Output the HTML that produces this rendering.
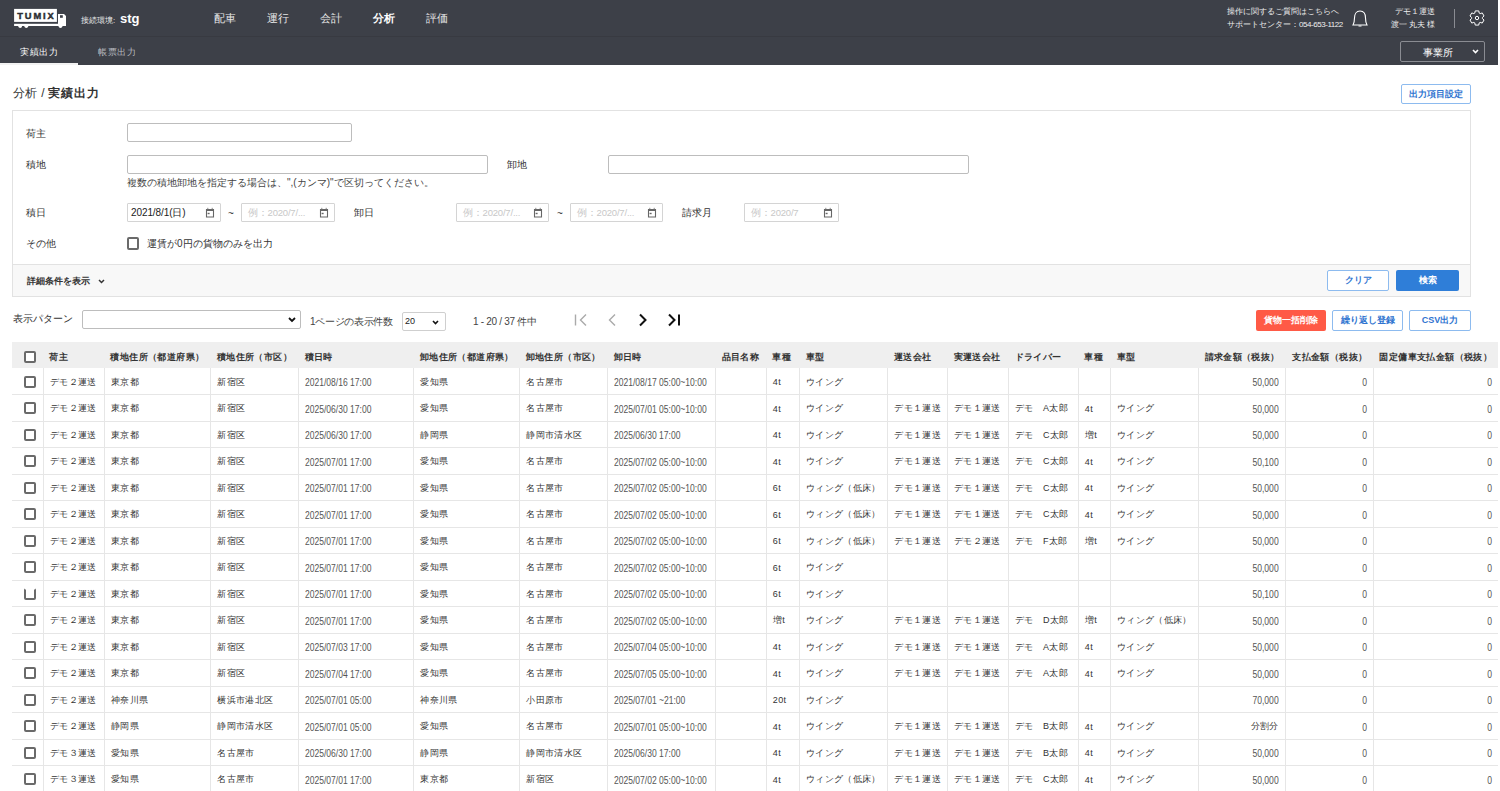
<!DOCTYPE html>
<html lang="ja"><head><meta charset="utf-8">
<style>
*{box-sizing:border-box}
html,body{margin:0;padding:0;background:#fff;width:1500px;height:791px;overflow:hidden}
body{font-family:"Liberation Sans",sans-serif;color:#333;font-size:10px;position:relative}
.abs{position:absolute;white-space:nowrap}
#hdr{position:absolute;left:0;top:0;width:1498px;height:65px;background:#3d4048}
#hdr .sep{position:absolute;left:0;top:36px;width:1498px;height:1px;background:#383a41}
.nav{position:absolute;top:12px;font-size:10.5px;color:#e6e6e6;line-height:13px}
.nav.b{font-weight:bold;color:#fff}
.tab{position:absolute;top:47px;font-size:9px;line-height:11px;letter-spacing:0.7px}
#tabline{position:absolute;left:0;top:63px;width:78px;height:2px;background:#f2f2f2}
.htxt{position:absolute;color:#eee;font-size:8px;line-height:10px;white-space:nowrap}
#office{position:absolute;left:1400px;top:41px;width:85px;height:21px;border:1px solid #8a8c92;border-radius:2px}
.crumb{position:absolute;left:13px;top:86px;font-size:12px;line-height:14px;color:#333}
.btn-o{position:absolute;border:1px solid #8dbbef;border-radius:2px;background:#fff;color:#2f74d0;font-size:9px;text-align:center;font-weight:bold}
#panel{position:absolute;left:12px;top:110px;width:1459px;height:187px;border:1px solid #e2e2e2;background:#fff}
#pfoot{position:absolute;left:0;top:153px;width:1457px;height:32px;background:#f8f8f8;border-top:1px solid #e2e2e2}
.lbl{position:absolute;font-size:10px;line-height:12px;color:#333}
.inp{position:absolute;border:1px solid #bdbdbd;border-radius:2px;background:#fff}
.date{position:absolute;border:1px solid #d4d4d4;border-radius:1px;background:#fff;height:19px}
.date .v{position:absolute;left:3px;top:3px;font-size:10px;line-height:11px;color:#222;letter-spacing:-0.1px}
.date .ph{position:absolute;left:6px;top:3px;font-size:9.5px;line-height:11px;color:#c8c8c8;letter-spacing:-0.2px}
.cal{position:absolute;right:5px;top:3px}
.tilde{position:absolute;font-size:10px;color:#333;margin-top:2px}
.cb{display:inline-block;width:12px;height:12px;border:2px solid #6a6a6a;border-radius:2px;background:#fff;vertical-align:middle}
.cb.notop{border-top-color:transparent}
table{position:absolute;left:12.2px;top:341.6px;border-collapse:collapse;table-layout:fixed;width:1485.8px}
th{background:#efefef;height:26.5px;padding:5px 6px 0;text-align:left;font-size:9px;letter-spacing:0.4px;font-weight:bold;color:#333;white-space:nowrap;overflow:hidden}
td{height:26.5px;padding:2px 6px 0;font-size:9px;letter-spacing:0.35px;color:#333;white-space:nowrap;overflow:hidden;border-left:1px solid #e6e6e6;border-bottom:1px solid #e6e6e6}
td:first-child{padding:1px 0 0 12px;border-left:none}
th:first-child{padding:5px 0 0 12px}
td.dt{color:#555}
td.n{color:#555}
.sx{display:inline-block;transform-origin:0 50%;letter-spacing:0}
.dt .sx{font-size:11px;transform:scaleX(0.775)}
.n .sx{font-size:11px;transform:scaleX(0.78);transform-origin:100% 50%}
.r{text-align:right}
</style></head><body>
<div id="hdr">
  <div class="sep"></div>
  <!-- logo -->
  <svg class="abs" style="left:13px;top:8px" width="56" height="22" viewBox="0 0 56 22">
    <rect x="1.1" y="0.9" width="42.8" height="13" fill="#fff"/>
    <text x="4.2" y="10.9" font-family="Liberation Sans" font-weight="bold" font-size="9.3" fill="#2b2d33" letter-spacing="1.9" stroke="#2b2d33" stroke-width="0.45">TUMIX</text>
    <path d="M45 5.9 h6 l2 2.2 v9.9 h-8z" fill="#fff"/>
    <rect x="47" y="7.2" width="2.8" height="2.6" fill="#3d4048"/>
    <rect x="1.1" y="15.8" width="51.9" height="2.2" fill="#fff"/>
    <circle cx="7.2" cy="18.2" r="1.8" fill="#fff"/>
    <circle cx="13.3" cy="18.2" r="1.8" fill="#fff"/>
    <circle cx="47.5" cy="18.2" r="1.8" fill="#fff"/>
  </svg>
  <div class="abs" style="left:81px;top:16px;font-size:8px;color:#e8e8e8;line-height:10px">接続環境:</div>
  <div class="abs" style="left:120px;top:11px;font-size:13px;font-weight:bold;color:#fff;line-height:16px">stg</div>
  <div class="nav" style="left:214px">配車</div>
  <div class="nav" style="left:267px">運行</div>
  <div class="nav" style="left:320px">会計</div>
  <div class="nav b" style="left:373px">分析</div>
  <div class="nav" style="left:426px">評価</div>
  <div class="htxt" style="left:1227px;top:7px">操作に関するご質問はこちらへ</div>
  <div class="htxt" style="left:1227px;top:20px">サポートセンター：<span style="letter-spacing:-0.45px">054-653-1122</span></div>
  <svg class="abs" style="left:1350px;top:9px" width="20" height="19" viewBox="0 0 20 19">
    <path d="M3 16 C4 14 4.5 12 4.5 9 C4.5 5 6.5 2 10 2 C13.5 2 15.5 5 15.5 9 C15.5 12 16 14 17 16 Z" fill="none" stroke="#fff" stroke-width="1.1"/>
    <path d="M8.5 17 h3" stroke="#fff" stroke-width="1"/>
  </svg>
  <div class="htxt" style="right:63px;top:7px">デモ１運送</div>
  <div class="htxt" style="right:63px;top:20px">渡一 丸夫 様</div>
  <div class="abs" style="left:1454px;top:9px;width:1px;height:19px;background:#8a8c92"></div>
  <svg class="abs" style="left:1469px;top:10px" width="16" height="16" viewBox="0 0 16 16"><path d="M5.80 3.07 L6.23 0.92 L9.77 0.92 L10.20 3.07 L11.17 3.63 L13.25 2.93 L15.02 5.99 L13.37 7.44 L13.37 8.56 L15.02 10.01 L13.25 13.07 L11.17 12.37 L10.20 12.93 L9.77 15.08 L6.23 15.08 L5.80 12.93 L4.83 12.37 L2.75 13.07 L0.98 10.01 L2.63 8.56 L2.63 7.44 L0.98 5.99 L2.75 2.93 L4.83 3.63Z" fill="none" stroke="#fff" stroke-width="1" stroke-linejoin="round"/><circle cx="8" cy="8" r="1.7" fill="none" stroke="#fff" stroke-width="1"/></svg>
  <div class="tab" style="left:20px;color:#fff">実績出力</div>
  <div class="tab" style="left:98px;color:#b9bbc0">帳票出力</div>
  <div id="tabline"></div>
  <div id="office">
    <div class="abs" style="left:22px;top:4px;font-size:10px;color:#fff;line-height:13px">事業所</div>
    <svg class="abs" style="left:71px;top:7px" width="7" height="5" viewBox="0 0 7 5"><path d="M1 1 L3.5 3.5 L6 1" fill="none" stroke="#fff" stroke-width="1.6"/></svg>
  </div>
</div>

<div class="crumb">分析 <span style="margin-left:1px">/</span> <b style="letter-spacing:0.9px">実績出力</b></div>
<div class="btn-o" style="left:1401px;top:84px;width:70px;height:20px;line-height:18px">出力項目設定</div>

<div id="panel">
  <div class="lbl" style="left:13px;top:17px">荷主</div>
  <div class="inp" style="left:114px;top:12px;width:225px;height:19px"></div>
  <div class="lbl" style="left:13px;top:48px">積地</div>
  <div class="inp" style="left:114px;top:44px;width:361px;height:19px"></div>
  <div class="lbl" style="left:494px;top:48px">卸地</div>
  <div class="inp" style="left:595px;top:44px;width:361px;height:19px"></div>
  <div class="lbl" style="left:114px;top:66px;font-size:10px;color:#444">複数の積地卸地を指定する場合は、",(カンマ)"で区切ってください。</div>
  <div class="lbl" style="left:13px;top:96px">積日</div>
  <div class="date" style="left:114px;top:92px;width:94px"><span class="v">2021/8/1(日)</span><svg class="cal" width="10" height="11" viewBox="0 0 10 11"><path d="M1.5 2.5 h7 v7.5 h-7 z" fill="none" stroke="#666" stroke-width="1.1"/><rect x="1" y="2" width="8" height="2" fill="#666"/><rect x="2.3" y="0.8" width="1" height="1.5" fill="#888"/><rect x="6.7" y="0.8" width="1" height="1.5" fill="#888"/><rect x="2.6" y="5.8" width="2" height="1.4" fill="#666"/></svg></div>
  <div class="tilde" style="left:215px;top:95px">~</div>
  <div class="date" style="left:228px;top:92px;width:94px"><span class="ph">例：2020/7/...</span><svg class="cal" width="10" height="11" viewBox="0 0 10 11"><path d="M1.5 2.5 h7 v7.5 h-7 z" fill="none" stroke="#666" stroke-width="1.1"/><rect x="1" y="2" width="8" height="2" fill="#666"/><rect x="2.3" y="0.8" width="1" height="1.5" fill="#888"/><rect x="6.7" y="0.8" width="1" height="1.5" fill="#888"/><rect x="2.6" y="5.8" width="2" height="1.4" fill="#666"/></svg></div>
  <div class="lbl" style="left:341px;top:96px">卸日</div>
  <div class="date" style="left:443px;top:92px;width:93px"><span class="ph">例：2020/7/...</span><svg class="cal" width="10" height="11" viewBox="0 0 10 11"><path d="M1.5 2.5 h7 v7.5 h-7 z" fill="none" stroke="#666" stroke-width="1.1"/><rect x="1" y="2" width="8" height="2" fill="#666"/><rect x="2.3" y="0.8" width="1" height="1.5" fill="#888"/><rect x="6.7" y="0.8" width="1" height="1.5" fill="#888"/><rect x="2.6" y="5.8" width="2" height="1.4" fill="#666"/></svg></div>
  <div class="tilde" style="left:544px;top:95px">~</div>
  <div class="date" style="left:557px;top:92px;width:93px"><span class="ph">例：2020/7/...</span><svg class="cal" width="10" height="11" viewBox="0 0 10 11"><path d="M1.5 2.5 h7 v7.5 h-7 z" fill="none" stroke="#666" stroke-width="1.1"/><rect x="1" y="2" width="8" height="2" fill="#666"/><rect x="2.3" y="0.8" width="1" height="1.5" fill="#888"/><rect x="6.7" y="0.8" width="1" height="1.5" fill="#888"/><rect x="2.6" y="5.8" width="2" height="1.4" fill="#666"/></svg></div>
  <div class="lbl" style="left:669px;top:96px">請求月</div>
  <div class="date" style="left:731px;top:92px;width:95px"><span class="ph">例：2020/7</span><svg class="cal" width="10" height="11" viewBox="0 0 10 11"><path d="M1.5 2.5 h7 v7.5 h-7 z" fill="none" stroke="#666" stroke-width="1.1"/><rect x="1" y="2" width="8" height="2" fill="#666"/><rect x="2.3" y="0.8" width="1" height="1.5" fill="#888"/><rect x="6.7" y="0.8" width="1" height="1.5" fill="#888"/><rect x="2.6" y="5.8" width="2" height="1.4" fill="#666"/></svg></div>
  <div class="lbl" style="left:13px;top:127px">その他</div>
  <span class="cb abs" style="left:114px;top:126px;width:12px;height:13px"></span>
  <div class="lbl" style="left:134px;top:127px">運賃が0円の貨物のみを出力</div>
  <div id="pfoot">
    <div class="lbl" style="left:14px;top:10px;font-weight:bold;font-size:9px">詳細条件を表示</div>
    <svg class="abs" style="left:85px;top:14px" width="7" height="5" viewBox="0 0 7 5"><path d="M1 1 L3.5 3.5 L6 1" fill="none" stroke="#333" stroke-width="1.5"/></svg>
    <div class="btn-o" style="left:1314px;top:5px;width:62px;height:21px;line-height:19px;font-size:9px">クリア</div>
    <div class="abs" style="left:1383px;top:5px;width:63px;height:21px;line-height:21px;background:#2f7ed8;border-radius:2px;color:#fff;font-size:9px;font-weight:bold;text-align:center">検索</div>
  </div>
</div>

<div class="lbl" style="left:13px;top:313px;font-size:10px">表示パターン</div>
<div class="inp" style="left:82px;top:310px;width:219px;height:19px">
  <svg class="abs" style="left:205px;top:6px" width="8" height="6" viewBox="0 0 8 6"><path d="M1 1 L4 4 L7 1" fill="none" stroke="#111" stroke-width="1.8"/></svg>
</div>
<div class="lbl" style="left:310px;top:316px;font-size:10px;color:#444;letter-spacing:-0.3px">1ページの表示件数</div>
<div class="inp" style="left:402px;top:312px;width:44px;height:19px;border-color:#cfcfcf">
  <span class="abs" style="left:2px;top:3px;font-size:9px;color:#222">20</span>
  <svg class="abs" style="left:29px;top:7px" width="7" height="5" viewBox="0 0 7 5"><path d="M1 1 L3.5 3.5 L6 1" fill="none" stroke="#111" stroke-width="1.6"/></svg>
</div>
<div class="lbl" style="left:473px;top:316px;font-size:10px;color:#444;letter-spacing:-0.3px">1 - 20 / 37 件中</div>
<svg class="abs" style="left:573px;top:313px" width="110" height="14" viewBox="0 0 110 14">
  <path d="M2.5 1.5 v11" stroke="#aaa" stroke-width="1.4"/>
  <path d="M13 1.5 L7.5 7 L13 12.5" fill="none" stroke="#aaa" stroke-width="1.4"/>
  <path d="M42 1.5 L36.5 7 L42 12.5" fill="none" stroke="#aaa" stroke-width="1.4"/>
  <path d="M67 1.5 L72.5 7 L67 12.5" fill="none" stroke="#111" stroke-width="2"/>
  <path d="M96 1.5 L101.5 7 L96 12.5" fill="none" stroke="#111" stroke-width="2"/>
  <path d="M106 1.5 v11" stroke="#111" stroke-width="2"/>
</svg>
<div class="abs" style="left:1256px;top:310px;width:70px;height:20.5px;line-height:20px;background:#ff5a46;border-radius:2px;color:#fff;font-size:9px;font-weight:bold;text-align:center">貨物一括削除</div>
<div class="btn-o" style="left:1332px;top:310px;width:71px;height:20.5px;line-height:18px">繰り返し登録</div>
<div class="btn-o" style="left:1409px;top:310px;width:62px;height:20.5px;line-height:18px;font-weight:bold">CSV出力</div>

<table>
<colgroup><col style="width:31.3px"><col style="width:61.0px"><col style="width:106.3px"><col style="width:87.8px"><col style="width:115.2px"><col style="width:105.9px"><col style="width:87.9px"><col style="width:108.0px"><col style="width:50.8px"><col style="width:33.2px"><col style="width:88.2px"><col style="width:59.8px"><col style="width:61.0px"><col style="width:69.8px"><col style="width:32.2px"><col style="width:88.0px"><col style="width:86.6px"><col style="width:88.3px"><col style="width:124.5px"></colgroup>
<thead><tr><th><span class="cb"></span></th><th>荷主</th><th>積地住所（都道府県）</th><th>積地住所（市区）</th><th>積日時</th><th>卸地住所（都道府県）</th><th>卸地住所（市区）</th><th>卸日時</th><th>品目名称</th><th>車種</th><th>車型</th><th>運送会社</th><th>実運送会社</th><th>ドライバー</th><th>車種</th><th>車型</th><th class="r">請求金額（税抜）</th><th class="r">支払金額（税抜）</th><th class="r">固定傭車支払金額（税抜）</th></tr></thead>
<tbody>
<tr><td><span class="cb"></span></td><td>デモ２運送</td><td>東京都</td><td>新宿区</td><td class="dt"><span class="sx">2021/08/16 17:00</span></td><td>愛知県</td><td>名古屋市</td><td class="dt"><span class="sx">2021/08/17 05:00~10:00</span></td><td></td><td>4t</td><td>ウイング</td><td></td><td></td><td></td><td></td><td></td><td class="r n"><span class="sx">50,000</span></td><td class="r n"><span class="sx">0</span></td><td class="r n"><span class="sx">0</span></td></tr>
<tr><td><span class="cb"></span></td><td>デモ２運送</td><td>東京都</td><td>新宿区</td><td class="dt"><span class="sx">2025/06/30 17:00</span></td><td>愛知県</td><td>名古屋市</td><td class="dt"><span class="sx">2025/07/01 05:00~10:00</span></td><td></td><td>4t</td><td>ウイング</td><td>デモ１運送</td><td>デモ１運送</td><td>デモ　A太郎</td><td>4t</td><td>ウイング</td><td class="r n"><span class="sx">50,000</span></td><td class="r n"><span class="sx">0</span></td><td class="r n"><span class="sx">0</span></td></tr>
<tr><td><span class="cb"></span></td><td>デモ２運送</td><td>東京都</td><td>新宿区</td><td class="dt"><span class="sx">2025/06/30 17:00</span></td><td>静岡県</td><td>静岡市清水区</td><td class="dt"><span class="sx">2025/06/30 17:00</span></td><td></td><td>4t</td><td>ウイング</td><td>デモ１運送</td><td>デモ１運送</td><td>デモ　C太郎</td><td>増t</td><td>ウイング</td><td class="r n"><span class="sx">50,000</span></td><td class="r n"><span class="sx">0</span></td><td class="r n"><span class="sx">0</span></td></tr>
<tr><td><span class="cb"></span></td><td>デモ２運送</td><td>東京都</td><td>新宿区</td><td class="dt"><span class="sx">2025/07/01 17:00</span></td><td>愛知県</td><td>名古屋市</td><td class="dt"><span class="sx">2025/07/02 05:00~10:00</span></td><td></td><td>4t</td><td>ウイング</td><td>デモ１運送</td><td>デモ１運送</td><td>デモ　C太郎</td><td>4t</td><td>ウイング</td><td class="r n"><span class="sx">50,100</span></td><td class="r n"><span class="sx">0</span></td><td class="r n"><span class="sx">0</span></td></tr>
<tr><td><span class="cb"></span></td><td>デモ２運送</td><td>東京都</td><td>新宿区</td><td class="dt"><span class="sx">2025/07/01 17:00</span></td><td>愛知県</td><td>名古屋市</td><td class="dt"><span class="sx">2025/07/02 05:00~10:00</span></td><td></td><td>6t</td><td>ウィング（低床）</td><td>デモ１運送</td><td>デモ１運送</td><td>デモ　C太郎</td><td>4t</td><td>ウイング</td><td class="r n"><span class="sx">50,000</span></td><td class="r n"><span class="sx">0</span></td><td class="r n"><span class="sx">0</span></td></tr>
<tr><td><span class="cb"></span></td><td>デモ２運送</td><td>東京都</td><td>新宿区</td><td class="dt"><span class="sx">2025/07/01 17:00</span></td><td>愛知県</td><td>名古屋市</td><td class="dt"><span class="sx">2025/07/02 05:00~10:00</span></td><td></td><td>6t</td><td>ウィング（低床）</td><td>デモ１運送</td><td>デモ１運送</td><td>デモ　C太郎</td><td>4t</td><td>ウイング</td><td class="r n"><span class="sx">50,000</span></td><td class="r n"><span class="sx">0</span></td><td class="r n"><span class="sx">0</span></td></tr>
<tr><td><span class="cb"></span></td><td>デモ２運送</td><td>東京都</td><td>新宿区</td><td class="dt"><span class="sx">2025/07/01 17:00</span></td><td>愛知県</td><td>名古屋市</td><td class="dt"><span class="sx">2025/07/02 05:00~10:00</span></td><td></td><td>6t</td><td>ウィング（低床）</td><td>デモ１運送</td><td>デモ２運送</td><td>デモ　F太郎</td><td>増t</td><td>ウイング</td><td class="r n"><span class="sx">50,000</span></td><td class="r n"><span class="sx">0</span></td><td class="r n"><span class="sx">0</span></td></tr>
<tr><td><span class="cb"></span></td><td>デモ２運送</td><td>東京都</td><td>新宿区</td><td class="dt"><span class="sx">2025/07/01 17:00</span></td><td>愛知県</td><td>名古屋市</td><td class="dt"><span class="sx">2025/07/02 05:00~10:00</span></td><td></td><td>6t</td><td>ウイング</td><td></td><td></td><td></td><td></td><td></td><td class="r n"><span class="sx">50,000</span></td><td class="r n"><span class="sx">0</span></td><td class="r n"><span class="sx">0</span></td></tr>
<tr><td><span class="cb notop"></span></td><td>デモ２運送</td><td>東京都</td><td>新宿区</td><td class="dt"><span class="sx">2025/07/01 17:00</span></td><td>愛知県</td><td>名古屋市</td><td class="dt"><span class="sx">2025/07/02 05:00~10:00</span></td><td></td><td>6t</td><td>ウイング</td><td></td><td></td><td></td><td></td><td></td><td class="r n"><span class="sx">50,100</span></td><td class="r n"><span class="sx">0</span></td><td class="r n"><span class="sx">0</span></td></tr>
<tr><td><span class="cb"></span></td><td>デモ２運送</td><td>東京都</td><td>新宿区</td><td class="dt"><span class="sx">2025/07/01 17:00</span></td><td>愛知県</td><td>名古屋市</td><td class="dt"><span class="sx">2025/07/02 05:00~10:00</span></td><td></td><td>増t</td><td>ウイング</td><td>デモ１運送</td><td>デモ１運送</td><td>デモ　D太郎</td><td>増t</td><td>ウィング（低床）</td><td class="r n"><span class="sx">50,000</span></td><td class="r n"><span class="sx">0</span></td><td class="r n"><span class="sx">0</span></td></tr>
<tr><td><span class="cb"></span></td><td>デモ２運送</td><td>東京都</td><td>新宿区</td><td class="dt"><span class="sx">2025/07/03 17:00</span></td><td>愛知県</td><td>名古屋市</td><td class="dt"><span class="sx">2025/07/04 05:00~10:00</span></td><td></td><td>4t</td><td>ウイング</td><td>デモ１運送</td><td>デモ１運送</td><td>デモ　A太郎</td><td>4t</td><td>ウイング</td><td class="r n"><span class="sx">50,000</span></td><td class="r n"><span class="sx">0</span></td><td class="r n"><span class="sx">0</span></td></tr>
<tr><td><span class="cb"></span></td><td>デモ２運送</td><td>東京都</td><td>新宿区</td><td class="dt"><span class="sx">2025/07/04 17:00</span></td><td>愛知県</td><td>名古屋市</td><td class="dt"><span class="sx">2025/07/05 05:00~10:00</span></td><td></td><td>4t</td><td>ウイング</td><td>デモ１運送</td><td>デモ１運送</td><td>デモ　A太郎</td><td>4t</td><td>ウイング</td><td class="r n"><span class="sx">50,000</span></td><td class="r n"><span class="sx">0</span></td><td class="r n"><span class="sx">0</span></td></tr>
<tr><td><span class="cb"></span></td><td>デモ２運送</td><td>神奈川県</td><td>横浜市港北区</td><td class="dt"><span class="sx">2025/07/01 05:00</span></td><td>神奈川県</td><td>小田原市</td><td class="dt"><span class="sx">2025/07/01 ~21:00</span></td><td></td><td>20t</td><td>ウイング</td><td></td><td></td><td></td><td></td><td></td><td class="r n"><span class="sx">70,000</span></td><td class="r n"><span class="sx">0</span></td><td class="r n"><span class="sx">0</span></td></tr>
<tr><td><span class="cb"></span></td><td>デモ２運送</td><td>静岡県</td><td>静岡市清水区</td><td class="dt"><span class="sx">2025/07/01 05:00</span></td><td>愛知県</td><td>名古屋市</td><td class="dt"><span class="sx">2025/07/01 05:00~10:00</span></td><td></td><td>4t</td><td>ウイング</td><td>デモ１運送</td><td>デモ１運送</td><td>デモ　B太郎</td><td>4t</td><td>ウイング</td><td class="r">分割分</td><td class="r n"><span class="sx">0</span></td><td class="r n"><span class="sx">0</span></td></tr>
<tr><td><span class="cb"></span></td><td>デモ３運送</td><td>愛知県</td><td>名古屋市</td><td class="dt"><span class="sx">2025/06/30 17:00</span></td><td>静岡県</td><td>静岡市清水区</td><td class="dt"><span class="sx">2025/06/30 17:00</span></td><td></td><td>4t</td><td>ウイング</td><td>デモ１運送</td><td>デモ１運送</td><td>デモ　B太郎</td><td>4t</td><td>ウイング</td><td class="r n"><span class="sx">50,000</span></td><td class="r n"><span class="sx">0</span></td><td class="r n"><span class="sx">0</span></td></tr>
<tr><td><span class="cb"></span></td><td>デモ３運送</td><td>愛知県</td><td>名古屋市</td><td class="dt"><span class="sx">2025/07/01 17:00</span></td><td>東京都</td><td>新宿区</td><td class="dt"><span class="sx">2025/07/02 05:00~10:00</span></td><td></td><td>4t</td><td>ウィング（低床）</td><td>デモ１運送</td><td>デモ１運送</td><td>デモ　C太郎</td><td>4t</td><td>ウイング</td><td class="r n"><span class="sx">50,000</span></td><td class="r n"><span class="sx">0</span></td><td class="r n"><span class="sx">0</span></td></tr>

</tbody>
</table>
</body></html>
